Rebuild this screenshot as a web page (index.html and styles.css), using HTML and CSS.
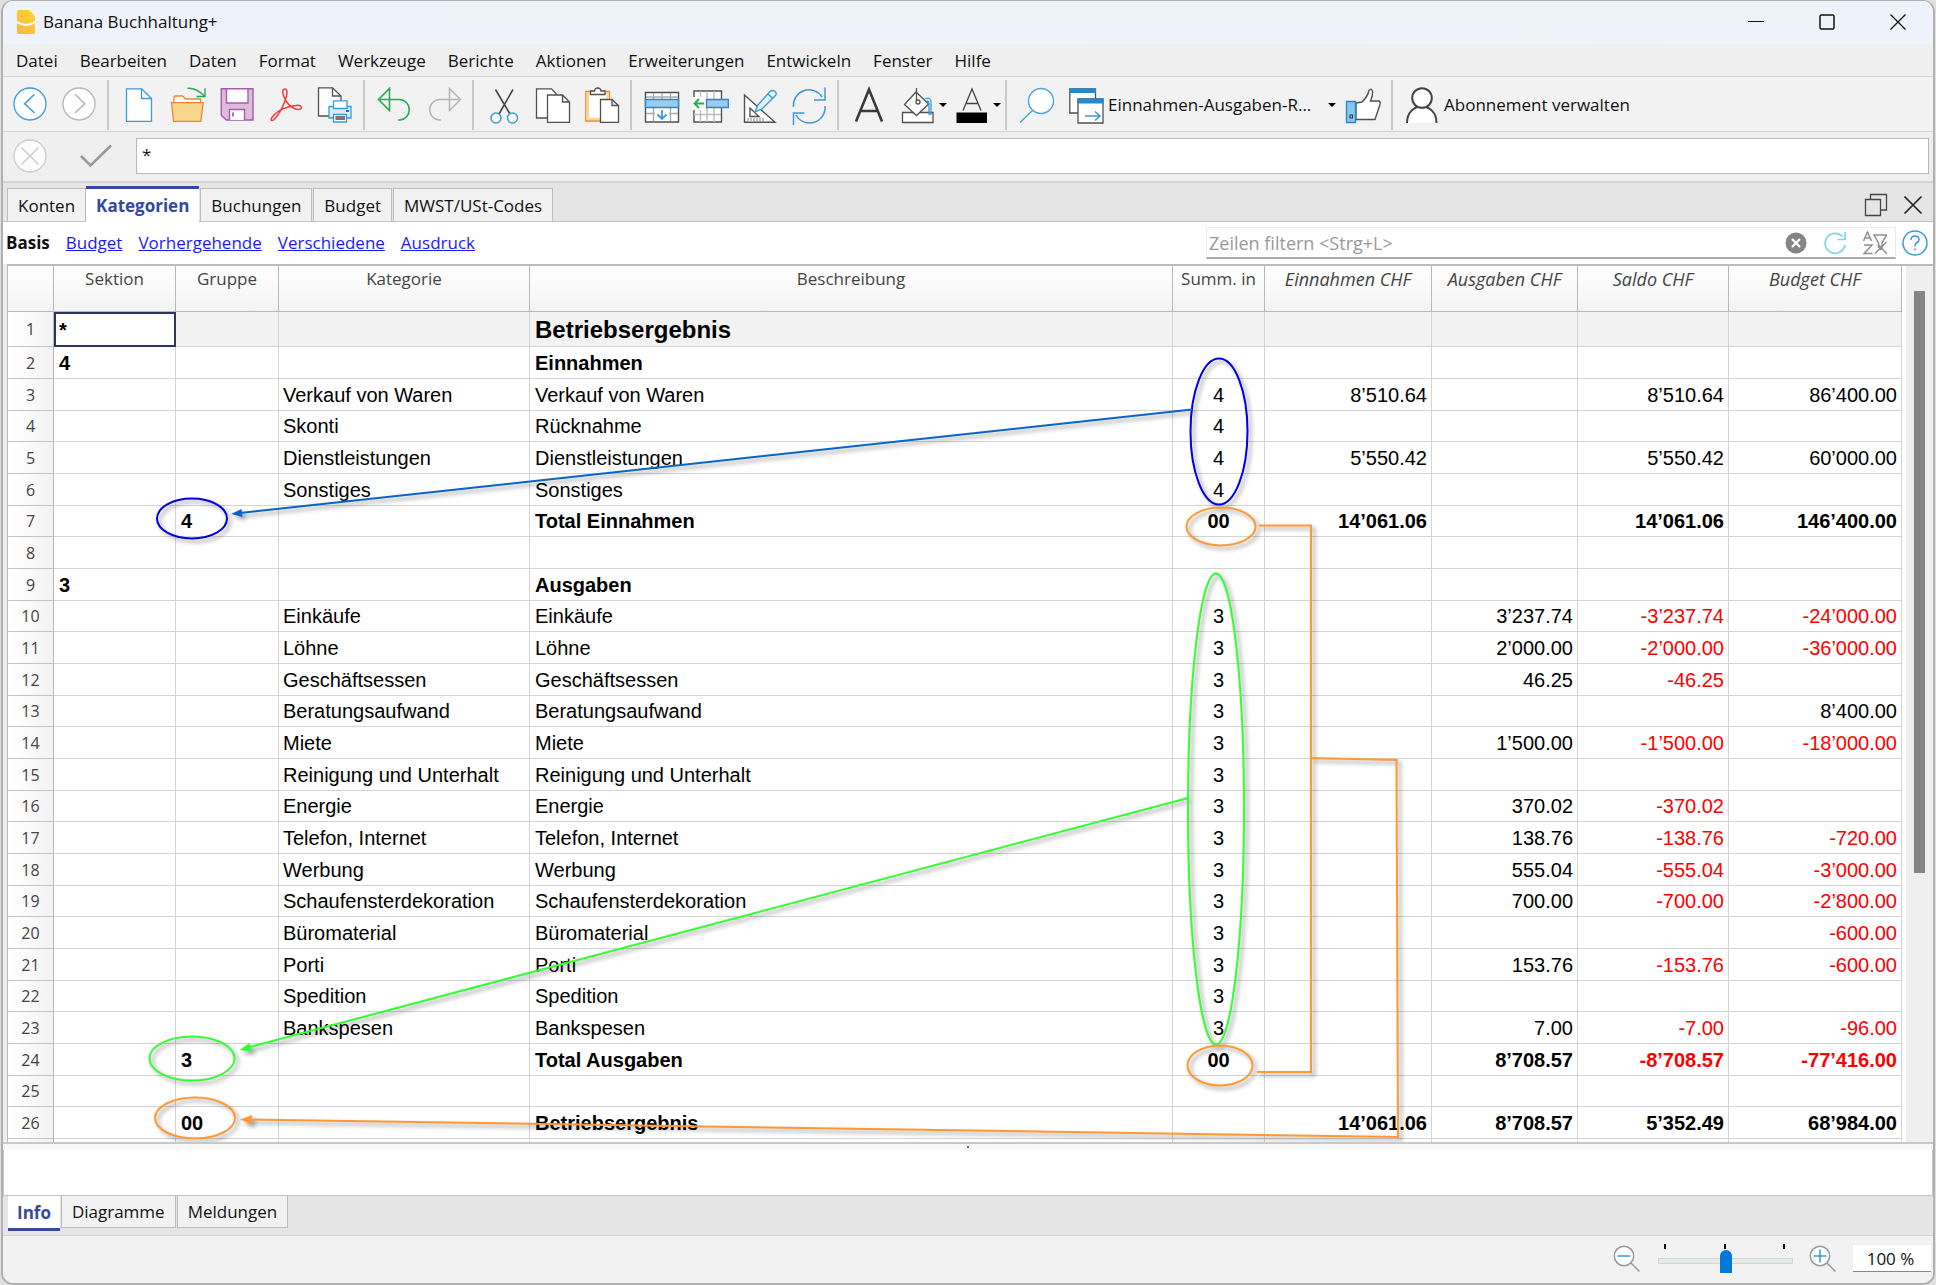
FILE: index.html
```html
<!DOCTYPE html>
<html lang="de">
<head>
<meta charset="utf-8">
<title>Banana Buchhaltung+</title>
<link rel="stylesheet" href="styles.css">
</head>
<body>
<div class="window">
  <header class="titlebar">
    <svg class="logo" width="18" height="24" viewBox="0 0 18 24"><defs><linearGradient id="lg" x1="0" y1="1" x2="1" y2="0"><stop offset="0" stop-color="#ffb547"/><stop offset="1" stop-color="#ffd52b"/></linearGradient></defs><path d="M2 0H12L18 6V22Q18 24 16 24H2Q0 24 0 22V2Q0 0 2 0Z" fill="url(#lg)"/><path d="M0 11Q9 17 18 11V13Q9 19 0 13Z" fill="#fff"/></svg>
    <h1>Banana Buchhaltung+</h1>
    <div class="caption-buttons">
      <button aria-label="Minimieren"><svg width="16" height="16" viewBox="0 0 16 16"><path d="M0 7.500H16" stroke="#111"/></svg></button>
      <button aria-label="Maximieren"><svg width="16" height="16" viewBox="0 0 16 16" fill="none"><rect x="1" y="1" width="14" height="14" rx="1.500" stroke="#111" stroke-width="1.500"/></svg></button>
      <button aria-label="Schliessen"><svg width="16" height="16" viewBox="0 0 16 16"><path d="M.5 .5L15.500 15.500M15.500 .5L.5 15.500" stroke="#111" stroke-width="1.300"/></svg></button>
    </div>
  </header>

  <nav class="menubar">
    <button>Datei</button><button>Bearbeiten</button><button>Daten</button><button>Format</button><button>Werkzeuge</button><button>Berichte</button><button>Aktionen</button><button>Erweiterungen</button><button>Entwickeln</button><button>Fenster</button><button>Hilfe</button>
  </nav>

  <div class="toolbar">
    <button class="tool" aria-label="Zurück"><svg viewBox="0 0 36 36"><circle cx="18" cy="17" r="16" fill="#fff" stroke="#3c9ad6" stroke-width="1.300"/><path d="M22.500 7.300L12.700 16.700L22.500 26" stroke="#3c9ad6" stroke-width="1.500"/></svg></button>
    <button class="tool" aria-label="Vorwärts"><svg viewBox="0 0 36 36"><circle cx="18" cy="17" r="16" fill="#fff" stroke="#b4b4b4" stroke-width="1.300"/><path d="M14 7.300L23.800 16.700L14 26" stroke="#b4b4b4" stroke-width="1.500"/></svg></button>
    <span class="sep"></span>
    <button class="tool" aria-label="Neu"><svg viewBox="0 0 36 36" stroke="#3c9ad6" stroke-width="1.300"><path d="M5.500 1.800H20.500L30.500 11.500V34.300H5.500Z" fill="#fff"/><path d="M20.500 1.800V11.500H30.500"/></svg></button>
    <button class="tool" aria-label="Öffnen"><svg viewBox="0 0 36 36" stroke="#ee8434" stroke-width="1.300"><path d="M4 15.500V10.500Q4 9 5.500 9H12Q13.500 9 14 10.500T16 12H30.500V15.500" fill="#fff"/><path d="M1.500 15.700H33.200L30.800 34.300H3.500Z" fill="#f8d78c"/><path d="M17.500 1.300Q26 .5 35 9.500M26.500 9.500H35V1.300" stroke="#23a455"/></svg></button>
    <button class="tool" aria-label="Speichern"><svg viewBox="0 0 36 36" stroke="#a85aac" stroke-width="1.400"><path d="M2.300 1.800H34V33H7.500L2.300 28.500Z" fill="#dcbbdd"/><path d="M7.500 1.800H29V16H7.500ZM10.500 33V22.500H25.500V33" fill="#fff"/><path d="M14 25.500V29.500" stroke="#555"/></svg></button>
    <button class="tool" aria-label="PDF"><svg viewBox="0 0 36 36" stroke="#f03c3c" stroke-width="1.500"><path d="M17 2C13 2 15 9 18 14C21 19 27 23 31 22.500C35 22 34 17.500 28 18.500C21 19.500 12 22 7 27C1 33 3 35 6 32.500C11 28 17 16 18.500 9C19.500 4 19 2 17 2Z"/></svg></button>
    <button class="tool" aria-label="Drucken"><svg viewBox="0 0 36 36" stroke-width="1.300"><path d="M1.500 .8H15.500L24 9V29H1.500Z" fill="#fff" stroke="#505050"/><path d="M15.500 .8V9H24" stroke="#505050"/><g stroke="#3c9ad6" fill="#fff"><path d="M12 19.500H34V31H12Z" fill="#d9edf9"/><path d="M16.500 13.800H30V21.500H16.500Z"/><path d="M16.500 27.500H29.500V35H16.500Z"/></g><path d="M18.500 31H28" stroke="#777" stroke-width="4"/><path d="M29 24H32" stroke="#1677c0" stroke-width="2"/></svg></button>
    <span class="sep"></span>
    <button class="tool" aria-label="Rückgängig"><svg viewBox="0 0 36 36" stroke="#23ad50" stroke-width="1.600"><path d="M12.500 1.500V23.500L1.500 12.500ZM3 12.500H23A10.300 10.300 0 0 1 23 33H21"/></svg></button>
    <button class="tool" aria-label="Wiederholen"><svg viewBox="0 0 36 36" stroke="#b4b4b4" stroke-width="1.500"><path d="M23.500 1.500V23.500L34.500 12.500ZM33 12.500H13A10.300 10.300 0 0 0 13 33H15"/></svg></button>
    <span class="sep"></span>
    <button class="tool" aria-label="Ausschneiden"><svg viewBox="0 0 36 36"><path d="M9.500 2.500L24 27M27 2.500L13 27" stroke="#444" stroke-width="1.600"/><circle cx="10" cy="31" r="5" fill="#fff" stroke="#3c9ad6" stroke-width="1.500"/><circle cx="26.500" cy="31" r="5" fill="#fff" stroke="#3c9ad6" stroke-width="1.500"/></svg></button>
    <button class="tool" aria-label="Kopieren"><svg viewBox="0 0 36 36" stroke="#505050" stroke-width="1.300"><path d="M1.500 1.800H16.500L21 6.500V31H1.500Z" fill="#fff"/><path d="M12.500 8H27.500L34.500 15V35.300H12.500ZM27.500 8V15H34.500" fill="#fff"/></svg></button>
    <button class="tool" aria-label="Einfügen"><svg viewBox="0 0 36 36" stroke-width="1.300"><path d="M1.800 4.500H25.500V34H1.800Z" fill="#fff" stroke="#ee8434"/><path d="M4 6.500H23.500V32H4Z" stroke="#f8d78c" stroke-width="2"/><path d="M6.500 7.500V4H10.500Q11 1 13.800 1T17 4H21V7.500Z" fill="#fff" stroke="#505050"/><path d="M16.500 12.500H28L34.500 18.500V35.300H16.500ZM28 12.500V18.500H34.500" fill="#fff" stroke="#505050"/></svg></button>
    <span class="sep"></span>
    <button class="tool" aria-label="Zeilen einfügen"><svg viewBox="0 0 36 36" stroke-width="1.400"><path d="M1.500 5.500H34.500V35H1.500Z" fill="#fff" stroke="#505050"/><path d="M9.500 6V34M18 6V12M26.500 6V34M2 10H34M2 26.500H11M25 26.500H34" stroke="#aaa"/><path d="M1.500 12.500H34.500V20.500H1.500Z" fill="#9accf0" stroke="#2b87c8"/><path d="M18 23V32M13.500 27.500L18 32L22.500 27.500" stroke="#3c9ad6" stroke-width="1.800"/></svg></button>
    <button class="tool" aria-label="Zeilen hinzufügen"><svg viewBox="0 0 36 36" stroke-width="1.400"><path d="M1 4H28.500V35H1Z" fill="#fff" stroke="#505050"/><path d="M7.500 4V35M14 4V35M21 4V35M1 27.500H28" stroke="#bbb"/><path d="M0 10H13V23H0Z" fill="#fff" stroke="none"/><path d="M13.500 12.500H35.300V20.500H13.500Z" fill="#9accf0" stroke="#2b87c8"/><path d="M11 16.500H1.500M6 12L1.500 16.500L6 21" stroke="#23ad50" stroke-width="1.900"/></svg></button>
    <button class="tool" aria-label="Bearbeiten"><svg viewBox="0 0 36 36" stroke-width="1.400"><path d="M2.500 8V35.300H33Z" fill="#fff" stroke="#505050"/><path d="M8 21V29.500H17Z" stroke="#505050"/><path d="M6 31V34M9 31V34M12 31V34M15 31V34M18 31V34M21 31V34" stroke="#888" stroke-width="1"/><path d="M13 25L16 18L28 4.500Q30.500 2.500 33 4.500T33 9L20 22Z" fill="#e6f3fc" stroke="#3c9ad6"/><path d="M26 7L31 11.500" stroke="#3c9ad6"/></svg></button>
    <button class="tool" aria-label="Neu berechnen"><svg viewBox="0 0 36 36" stroke="#3c9ad6" stroke-width="1.500"><path d="M2.500 20A15.500 15.500 0 0 1 31 10M34 .5V13H23M34 19A15.500 15.500 0 0 1 5 28M2.500 38V26H13.500"/></svg></button>
    <span class="sep"></span>
    <button class="tool" aria-label="Schrift"><svg viewBox="0 0 36 36" stroke="#3a3a3a" stroke-width="2.600"><path d="M5 34.500L18 2.500L31 34.500M9.500 24H26.500"/></svg></button>
    <button class="tool split" aria-label="Hintergrundfarbe"><svg viewBox="0 0 36 36" stroke-width="1.300"><path d="M2.500 25.500H33V35.500H2.500Z" fill="#fff" stroke="#505050"/><path d="M16 5L28.500 17L16.500 28.500L4.500 17.500Z" fill="#fff" stroke="#505050"/><path d="M16.500 1V14" stroke="#505050"/><circle cx="18" cy="15" r="2" stroke="#505050"/><path d="M25 12Q31 9.500 31 15V27H29V17Q29 14 27 14" stroke="#3c9ad6"/></svg><i class="caret"></i></button>
    <button class="tool split" aria-label="Textfarbe"><svg viewBox="0 0 36 36"><path d="M9 23.500L18 2L27 23.500M12.500 16.500H23.500" stroke="#444" stroke-width="1.300"/><path d="M2.500 25.500H33V36H2.500Z" fill="#000"/></svg><i class="caret"></i></button>
    <span class="sep"></span>
    <button class="tool" aria-label="Suchen"><svg viewBox="0 0 36 36" stroke="#4da3dc" stroke-width="1.400"><circle cx="22" cy="14" r="12.500" fill="#fff"/><path d="M13.500 23.500L1 35.500"/></svg></button>
    <button class="tool combo"><svg viewBox="0 0 36 36" stroke-width="1.300"><path d="M1.800 2H27.500V26H1.800Z" fill="#fff" stroke="#505050"/><path d="M1.200 1.500H28V6H1.200Z" fill="#2289cc"/><path d="M10 12H35V36H10Z" fill="#fff" stroke="#505050"/><path d="M9.300 11.500H35.500V16.500H9.300Z" fill="#2289cc"/><path d="M17 29H32M27 24.500L32 29L27 33.500" stroke="#3c9ad6" stroke-width="1.500"/></svg><span>Einnahmen-Ausgaben-R...</span><i class="caret"></i></button>
    <button class="tool" aria-label="Gefällt mir"><svg viewBox="0 0 36 36" stroke-width="1.400"><path d="M11 16L17 15Q23 9 24 3.500Q26 .5 27.500 4Q28 8 25.500 14H34Q36 15 34.500 19L30 32.500H11Z" fill="#fff" stroke="#505050"/><path d="M1.500 14.500H10.500V35.500H1.500Z" fill="#8ac5ee" stroke="#2b87c8"/><rect x="5" y="28" width="2.500" height="3" stroke="#333" stroke-width="1"/></svg></button>
    <span class="sep"></span>
    <button class="tool account"><svg viewBox="0 0 36 36" stroke="#444" stroke-width="2"><path d="M3 36C3 14 32.500 14 32.500 36" fill="#fff"/><circle cx="18" cy="11" r="9.800" fill="#fff"/></svg><span>Abonnement verwalten</span></button>
  </div>

  <div class="formula">
    <button class="cancel" aria-label="Abbrechen"><svg width="34" height="34" viewBox="0 0 34 34"><circle cx="17" cy="17" r="16" fill="#fcfcfc" stroke="#ccc" stroke-width="1.300"/><path d="M8.500 8.500L25.500 25.500M25.500 8.500L8.500 25.500" stroke="#ccc" stroke-width="1.500"/></svg></button>
    <button class="accept" aria-label="Übernehmen"><svg width="32" height="24" viewBox="0 0 32 24"><path d="M1 12L10.500 21.500L31 1.500" fill="none" stroke="#999" stroke-width="2.600"/></svg></button>
    <input type="text" aria-label="Zellinhalt" value="*">
  </div>

  <div class="tabs top">
    <button>Konten</button><button class="active">Kategorien</button><button>Buchungen</button><button>Budget</button><button>MWST/USt-Codes</button>
    <div class="tab-actions">
      <button aria-label="Fenster lösen"><svg width="24" height="24" viewBox="0 0 24 24" fill="none" stroke="#444" stroke-width="1.300"><path d="M1.500 6.500H16.500V22.500H1.500Z"/><path d="M6.500 6V1.500H22.500V17H17"/></svg></button>
      <button aria-label="Tabelle schliessen"><svg width="20" height="20" viewBox="0 0 20 20" stroke="#222" stroke-width="1.700"><path d="M1.500 1.500L18.500 18.500M18.500 1.500L1.500 18.500"/></svg></button>
    </div>
  </div>

  <div class="views">
    <b>Basis</b><a href="#budget">Budget</a><a href="#vorhergehende">Vorhergehende</a><a href="#verschiedene">Verschiedene</a><a href="#ausdruck">Ausdruck</a>
    <div class="filter">
      <input type="text" placeholder="Zeilen filtern &lt;Strg+L&gt;" aria-label="Zeilen filtern">
      <button aria-label="Filter löschen"><svg width="22" height="22" viewBox="0 0 22 22"><circle cx="11" cy="11" r="10.500" fill="#858585"/><path d="M7 7L15 15M15 7L7 15" stroke="#fff" stroke-width="2.200"/></svg></button>
      <button aria-label="Filter aktualisieren"><svg width="24" height="24" viewBox="0 0 24 24" fill="none" stroke="#7fd6e4" stroke-width="1.700"><path d="M19.500 5.500A10 10 0 1 0 22 14M22 1V8.500H14.500"/></svg></button>
      <button aria-label="Sortieren"><svg width="24" height="24" viewBox="0 0 24 24" fill="none" stroke="#909090" stroke-width="1.500"><path d="M.5 10L4.500 1L8.500 10M2 7H7M1 14H9L1 22.500H9.500M11 4H23.500L19 12V18L15.500 16V12ZM12 22.500L23.500 11M15 13L24 23"/></svg></button>
    </div>
    <button class="help" aria-label="Hilfe"><svg width="26" height="26" viewBox="0 0 26 26" fill="none" stroke="#3c9ad6" stroke-width="1.500"><circle cx="13" cy="13" r="12"/><path d="M9 10Q9 6 13 6T17 9.500Q17 11.500 15 12.500T13 15.500V16.500M13 18.500V20.500"/></svg></button>
  </div>

  <main class="sheet">
    <div class="grid">
    <table>
      <colgroup><col class="c-num"><col class="c-sec"><col class="c-grp"><col class="c-cat"><col><col class="c-sum"><col class="c-ein"><col class="c-aus"><col class="c-sal"><col class="c-bud"></colgroup>
      <thead><tr><th><th>Sektion<th>Gruppe<th>Kategorie<th>Beschreibung<th>Summ. in<th class="calc">Einnahmen CHF<th class="calc">Ausgaben CHF<th class="calc">Saldo CHF<th class="calc">Budget CHF</tr></thead>
      <tbody>
      <tr class="title"><th>1<td class="current">*<td><td><td>Betriebsergebnis<td><td><td><td><td></tr>
      <tr class="bold"><th>2<td>4<td><td><td>Einnahmen<td><td><td><td><td></tr>
      <tr><th>3<td><td><td>Verkauf von Waren<td>Verkauf von Waren<td>4<td>8’510.64<td><td>8’510.64<td>86’400.00</tr>
      <tr><th>4<td><td><td>Skonti<td>Rücknahme<td>4<td><td><td><td></tr>
      <tr><th>5<td><td><td>Dienstleistungen<td>Dienstleistungen<td>4<td>5’550.42<td><td>5’550.42<td>60’000.00</tr>
      <tr><th>6<td><td><td>Sonstiges<td>Sonstiges<td>4<td><td><td><td></tr>
      <tr class="bold"><th>7<td><td>4<td><td>Total Einnahmen<td>00<td>14’061.06<td><td>14’061.06<td>146’400.00</tr>
      <tr><th>8<td><td><td><td><td><td><td><td><td></tr>
      <tr class="bold"><th>9<td>3<td><td><td>Ausgaben<td><td><td><td><td></tr>
      <tr><th>10<td><td><td>Einkäufe<td>Einkäufe<td>3<td><td>3’237.74<td class="neg">-3’237.74<td class="neg">-24’000.00</tr>
      <tr><th>11<td><td><td>Löhne<td>Löhne<td>3<td><td>2’000.00<td class="neg">-2’000.00<td class="neg">-36’000.00</tr>
      <tr><th>12<td><td><td>Geschäftsessen<td>Geschäftsessen<td>3<td><td>46.25<td class="neg">-46.25<td></tr>
      <tr><th>13<td><td><td>Beratungsaufwand<td>Beratungsaufwand<td>3<td><td><td><td>8’400.00</tr>
      <tr><th>14<td><td><td>Miete<td>Miete<td>3<td><td>1’500.00<td class="neg">-1’500.00<td class="neg">-18’000.00</tr>
      <tr><th>15<td><td><td>Reinigung und Unterhalt<td>Reinigung und Unterhalt<td>3<td><td><td><td></tr>
      <tr><th>16<td><td><td>Energie<td>Energie<td>3<td><td>370.02<td class="neg">-370.02<td></tr>
      <tr><th>17<td><td><td>Telefon, Internet<td>Telefon, Internet<td>3<td><td>138.76<td class="neg">-138.76<td class="neg">-720.00</tr>
      <tr><th>18<td><td><td>Werbung<td>Werbung<td>3<td><td>555.04<td class="neg">-555.04<td class="neg">-3’000.00</tr>
      <tr><th>19<td><td><td>Schaufensterdekoration<td>Schaufensterdekoration<td>3<td><td>700.00<td class="neg">-700.00<td class="neg">-2’800.00</tr>
      <tr><th>20<td><td><td>Büromaterial<td>Büromaterial<td>3<td><td><td><td class="neg">-600.00</tr>
      <tr><th>21<td><td><td>Porti<td>Porti<td>3<td><td>153.76<td class="neg">-153.76<td class="neg">-600.00</tr>
      <tr><th>22<td><td><td>Spedition<td>Spedition<td>3<td><td><td><td></tr>
      <tr><th>23<td><td><td>Bankspesen<td>Bankspesen<td>3<td><td>7.00<td class="neg">-7.00<td class="neg">-96.00</tr>
      <tr class="bold"><th>24<td><td>3<td><td>Total Ausgaben<td>00<td><td>8’708.57<td class="neg">-8’708.57<td class="neg">-77’416.00</tr>
      <tr><th>25<td><td><td><td><td><td><td><td><td></tr>
      <tr class="bold"><th>26<td><td>00<td><td>Betriebsergebnis<td><td>14’061.06<td>8’708.57<td>5’352.49<td>68’984.00</tr>
      <tr><th><td><td><td><td><td><td><td><td><td></tr>
      </tbody>
    </table>
    </div>
    <div class="scrollbar"><div class="thumb"></div></div>
    <svg class="notes" width="1926" height="877" viewBox="7 266 1926 877" fill="none" stroke-width="2">
      <g stroke="#0000e6">
        <ellipse cx="1219" cy="431.500" rx="28.500" ry="73"/>
        <ellipse cx="192" cy="518.500" rx="35" ry="20"/>
      </g>
      <path d="M1192 409.500L240 513" stroke="#0a64c8"/>
      <path d="M231 514L241.500 509L242.500 517Z" fill="#0a64c8"/>
      <g stroke="#33ff33">
        <ellipse cx="1216" cy="809" rx="28" ry="235.500"/>
        <ellipse cx="192" cy="1058.500" rx="42.500" ry="22"/>
        <path d="M1188 798L248 1047.500"/>
      </g>
      <path d="M239.500 1050L249.500 1043L252 1051.500Z" fill="#33ff33"/>
      <g stroke="#ff9933">
        <ellipse cx="1221" cy="526.500" rx="34.500" ry="19"/>
        <ellipse cx="1220" cy="1065.500" rx="32.500" ry="20"/>
        <ellipse cx="195" cy="1118" rx="40" ry="20.500"/>
        <path d="M1259 525.500H1311V1072H1257"/>
        <path d="M1311 758L1396.500 760L1398 1137L248 1119.500"/>
      </g>
      <path d="M240 1119.500L252 1115V1124.500Z" fill="#ff9933"/>
    </svg>
  </main>

  <div class="splitter"><i></i></div>
  <section class="info"></section>
  <div class="tabs bottom">
    <button class="active">Info</button><button>Diagramme</button><button>Meldungen</button>
  </div>
  <footer class="status">
    <button aria-label="Verkleinern"><svg width="28" height="28" viewBox="0 0 28 28" fill="none" stroke="#999" stroke-width="1.500"><circle cx="11" cy="11" r="9.700" fill="#fff"/><path d="M18 18L26.500 26.500"/><path d="M4.500 11H17.500" stroke="#3c9ad6"/></svg></button>
    <div class="zoom"><div class="ticks"><i></i><i></i><i></i></div><input type="range" min="0" max="100" value="50" aria-label="Zoom"></div>
    <button aria-label="Vergrössern"><svg width="28" height="28" viewBox="0 0 28 28" fill="none" stroke="#999" stroke-width="1.500"><circle cx="11" cy="11" r="9.700" fill="#fff"/><path d="M18 18L26.500 26.500"/><path d="M4.500 11H17.500M11 4.500V17.500" stroke="#3c9ad6"/></svg></button>
    <input class="percent" type="text" value="100 %" aria-label="Zoomfaktor">
  </footer>
</div>
</body>
</html>
```

FILE: styles.css
```css
* { box-sizing: border-box; }

body {
  margin: 0;
  padding: 0 1px;
  background: #e0e0e0;
  font: 17px/22px "Open Sans", "Noto Sans", sans-serif;
  color: #111;
}

button, input { font: inherit; color: inherit; }
button { border: 0; padding: 0; margin: 0; background: none; white-space: nowrap; }
svg { display: block; flex: none; }

.window {
  display: flex;
  flex-direction: column;
  height: 100vh;
  border: 2px solid #b0b0b0;
  border-top-width: 1px;
  border-radius: 12px;
  background: #efefef;
  overflow: hidden;
}

/* Title bar */
.titlebar {
  display: flex;
  align-items: center;
  flex: none;
  height: 43px;
  padding: 0 27px 2px 14px;
  background: linear-gradient(90deg, #eef2fb, #eef3f8 80%, #eef2fb);
}
.titlebar h1 { margin: 0 0 0 8px; font-size: 17px; font-weight: 400; }
.caption-buttons { display: flex; gap: 55px; margin-left: auto; }

/* Menu */
.menubar {
  display: flex;
  align-items: center;
  flex: none;
  gap: 22px;
  height: 33px;
  padding: 2px 13px 0;
  border-bottom: 1px solid #d4d4d4;
}

/* Toolbar */
.toolbar {
  display: flex;
  align-items: center;
  flex: none;
  height: 55px;
  padding: 1px 0 0 2px;
  background: #f2f2f2;
  border-bottom: 1px solid #d4d4d4;
}
.toolbar svg { width: 36px; height: 36px; fill: none; overflow: visible; }
.tool { display: flex; align-items: center; justify-content: center; flex: none; width: 49px; height: 36px; }
.sep { flex: none; width: 2px; height: 50px; margin: 0 5px 0 4px; background: #c8c8c8; }
.caret { border: 4px solid transparent; border-top: 4px solid #000; border-bottom: 0; }
.tool.split { justify-content: flex-start; gap: 3px; width: 54px; padding-left: 7px; }
.tool.combo { justify-content: flex-start; gap: 4px; width: 277px; padding: 0 2px 0 7px; }
.combo .caret { margin-left: auto; }
.tool.account { gap: 4px; width: auto; padding-left: 6px; }

/* Formula bar */
.formula {
  display: flex;
  align-items: center;
  flex: none;
  height: 51px;
  padding: 0 4px 2px 10px;
  border-bottom: 2px solid #d4d4d4;
}
.accept { margin: 0 24px 0 33px; }
.formula input {
  flex: 1;
  height: 36px;
  padding: 0 5px 2px;
  border: 1px solid #b8b8b8;
  background: #fff;
}

/* Tabs */
.tabs { display: flex; flex: none; background: #e5e5e5; padding-left: 4px; }
.tabs > button {
  height: 33px;
  padding: 1px 10px 0;
  border: 1px solid #bcbcbc;
  background: #f2f2f2;
}
.tabs > button + button { margin-left: 1px; }
.tabs > .active { background: #fff; color: #35489c; font-weight: 700; }
.tabs.top { align-items: flex-end; height: 39px; border-bottom: 1px solid #c4c4c4; }
.tabs.top > button { border-bottom: 0; }
.tabs.top > .active { height: 36px; margin: 0 0 -1px; border-width: 3px 0 0; border-color: #35489c; }
.tab-actions { display: flex; align-items: center; gap: 15px; height: 32px; margin: 0 10px 0 auto; }
.tabs.bottom { align-items: flex-start; height: 41px; padding-left: 5px; border-top: 1px solid #c4c4c4; border-bottom: 1px solid #d4d4d4; }
.tabs.bottom > button { border-top: 0; height: 32px; }
.tabs.bottom > .active { height: 35px; padding: 1px 9px 0; border-width: 0 0 3px; border-color: #35489c; }

/* Views and filter */
.views {
  display: flex;
  align-items: center;
  flex: none;
  gap: 16px;
  height: 42px;
  padding: 0 5px 0 3px;
  background: #fff;
}
.views a { color: #1a1aff; text-decoration: underline; }
.filter {
  display: flex;
  align-items: center;
  gap: 16px;
  flex: 0 0 690px;
  height: 32px;
  margin-left: auto;
  padding: 0 8px 0 2px;
  border: 1px solid #ececec;
  border-bottom: 2px solid #aaa;
}
.filter input { flex: 1; border: 0; outline: 0; padding: 0; background: none; font-size: 18px; }
.filter input::placeholder { color: #999; opacity: 1; }
.help { margin-left: -10px; }

/* Sheet */
.sheet {
  position: relative;
  display: flex;
  flex: 1;
  min-height: 0;
  margin-left: 4px;
  border-top: 2px solid #bcbcbc;
  border-left: 1px solid #bcbcbc;
  background: #fff;
  overflow: hidden;
}
.grid { flex: 1; overflow: hidden; }
table { width: 100%; table-layout: fixed; border-collapse: separate; border-spacing: 0; }
.c-num { width: 46px; }
.c-sec { width: 122px; }
.c-grp { width: 103px; }
.c-cat { width: 251px; }
.c-sum { width: 92px; }
.c-ein { width: 167px; }
.c-aus { width: 146px; }
.c-sal { width: 151px; }
.c-bud { width: 173px; }
th { padding: 0; font-weight: 400; color: #444; white-space: nowrap; }
thead th {
  height: 46px;
  padding-top: 2px;
  vertical-align: top;
  background: linear-gradient(#fff, #f3f3f3);
  border-right: 1px solid #b8b8b8;
  border-bottom: 1px solid #b8b8b8;
}
.calc { font-size: 18px; font-style: italic; }
tbody tr { height: 32px; }
tbody tr:nth-child(3n + 1) { height: 31px; }
tbody tr.title { height: 35px; }
tbody th {
  font-size: 16px;
  background: linear-gradient(90deg, #fff, #f3f3f3);
  border-right: 1px solid #b8b8b8;
  border-bottom: 1px solid #c4c4c4;
}
td {
  padding: 0 4px;
  border-right: 1px solid #d4d4d4;
  border-bottom: 1px solid #d4d4d4;
  font: 20px/22px "Liberation Sans", Arial, sans-serif;
  color: #000;
  white-space: nowrap;
}
td:nth-child(n + 7) { text-align: right; }
td:nth-child(6) { text-align: center; }
.bold td, .title td { font-weight: 700; }
.bold td { padding-left: 5px; }
.bold td:nth-child(6) { padding-left: 4px; }
td:nth-child(5) { padding-left: 5px; }
.title td { background: #f2f2f2; }
.title td:nth-child(5) { padding-top: 1px; font-size: 24px; }
.title td.current { padding-left: 3px; background: #fff; border: 2px solid #2b3560; }
td.neg { color: #f00; }

.scrollbar { flex: none; width: 31px; padding: 25px 8px 0; border-left: 4px solid #fff; background: #efefef; }
.thumb { height: 582px; background: #858585; }
.notes { position: absolute; left: -1px; top: 0; filter: drop-shadow(3px 3px 2px #0006); pointer-events: none; }

/* Lower panel */
.splitter { display: flex; justify-content: center; align-items: center; flex: none; height: 8px; border-top: 2px solid #c8c8c8; background: #f8f8f8; }
.splitter i { width: 2px; height: 2px; background: #666; }
.info { flex: none; height: 45px; border: 1px solid #c8c8c8; border-width: 0 1px; background: #fff; }

.status { display: flex; align-items: center; flex: none; height: 47px; padding: 0 2px 2px; background: #f2f2f2; }
.status > :first-child { margin-left: auto; }
.zoom { width: 135px; height: 30px; margin: 0 16px 0 17px; }
.ticks { display: flex; justify-content: space-between; padding: 0 8px 0 6px; height: 6px; }
.ticks i { width: 2px; height: 5px; background: #111; }
.zoom input { display: block; width: 100%; height: 23px; margin: 0; appearance: none; background: none; }
.zoom input::-webkit-slider-runnable-track { height: 6px; background: #e5eaea; border: 1px solid #d4d4d4; }
.zoom input::-webkit-slider-thumb { appearance: none; width: 12px; height: 23px; margin-top: -9px; background: #0078d7; border-radius: 6px 6px 0 0; }
.percent { width: 78px; height: 27px; margin-left: 16px; padding: 0 3px 0 0; text-align: center; border: 0; border-bottom: 1px solid #888; background: #fff; }
```
